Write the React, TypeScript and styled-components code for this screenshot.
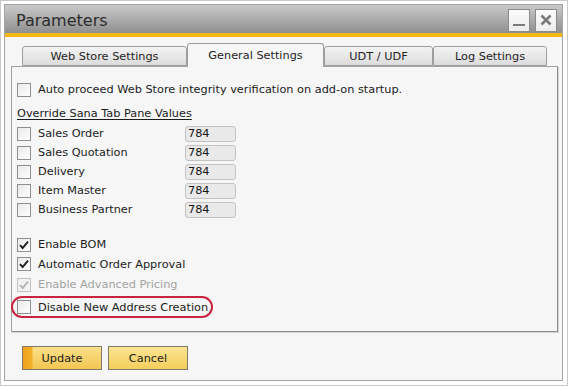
import styled, { createGlobalStyle } from 'styled-components'

const GlobalStyle = createGlobalStyle`
  body {
    margin: 0;
    background: #ffffff;
    font-family: "DejaVu Sans", Verdana, sans-serif;
  }
`

const Frame = styled.div`
  width: 568px;
  height: 386px;
  box-sizing: border-box;
  border: 1px solid #c9c9c9;
  padding: 3px 4px 4px 3px;
  background: #ffffff;
`

const Window = styled.div`
  height: 100%;
  box-sizing: border-box;
  border: 1px solid #a4a4a4;
  background: #f6f6f6;
  display: flex;
  flex-direction: column;
`

const TitleBar = styled.div`
  height: 28px;
  flex: none;
  display: flex;
  align-items: center;
  justify-content: space-between;
  padding: 0 5px 0 11px;
  background: linear-gradient(#cacaca 0%, #a9a9a9 55%, #8f8f8f 100%);
  border-bottom: 4px solid #f5b80e;
`

const Title = styled.div`
  font-size: 16px;
  color: #2c2c2c;
  padding-top: 2px;
`

const WinButtons = styled.div`
  display: flex;
  gap: 5px;
  margin-top: 2px;
`

const WinButton = styled.div`
  width: 22px;
  height: 23px;
  box-sizing: border-box;
  border: 1px solid #8a8a8a;
  background: linear-gradient(#fbfbfb, #ececec);
  display: flex;
  align-items: center;
  justify-content: center;
`

const Body = styled.div`
  flex: 1;
  display: flex;
  flex-direction: column;
  padding: 6px 4px 0 6px;
`

const TabRow = styled.div`
  display: flex;
  align-items: flex-end;
  height: 23px;
  margin-left: 11px;
  position: relative;
  z-index: 1;
`

const Tab = styled.div<{ $active?: boolean; $w: number }>`
  width: ${(p) => p.$w}px;
  height: ${(p) => (p.$active ? 24 : 20)}px;
  margin-bottom: ${(p) => (p.$active ? -1 : 0)}px;
  box-sizing: border-box;
  border: 1px solid #9d9d9d;
  border-bottom: ${(p) => (p.$active ? 'none' : '1px solid #9d9d9d')};
  border-radius: 3px 3px 0 0;
  background: ${(p) =>
    p.$active ? '#f6f6f6' : 'linear-gradient(#f3f3f3, #dcdcdc)'};
  display: flex;
  align-items: center;
  justify-content: center;
  font-size: 11.3px;
  color: #1f1f1f;
  padding-top: 1px;
  padding-bottom: ${(p) => (p.$active ? 2 : 0)}px;
`

const Panel = styled.div`
  height: 266px;
  box-sizing: border-box;
  border: 1px solid #a2a2a2;
  border-right-color: #8c8c8c;
  border-bottom-color: #8c8c8c;
  box-shadow: 1px 1px 0 #d4d4d4;
  padding: 13px 5px 0 5px;
  display: flex;
  flex-direction: column;
`

const Row = styled.div<{ $h?: number; $mt?: number }>`
  display: flex;
  align-items: center;
  height: ${(p) => p.$h ?? 19}px;
  margin-top: ${(p) => p.$mt ?? 0}px;
`

const Box = styled.div<{ $disabled?: boolean }>`
  width: 14px;
  height: 14px;
  flex: none;
  box-sizing: border-box;
  border: 1px solid ${(p) => (p.$disabled ? '#c4c4c4' : '#8e8f8f')};
  background: ${(p) =>
    p.$disabled ? '#f2f2f2' : 'linear-gradient(135deg, #e9e9e9, #ffffff)'};
  display: flex;
  align-items: center;
  justify-content: center;
`

const Label = styled.span<{ $disabled?: boolean; $w?: number }>`
  margin-left: 7px;
  font-size: 11.3px;
  color: ${(p) => (p.$disabled ? '#a3a3a3' : '#1c1c1c')};
  white-space: nowrap;
  ${(p) => (p.$w ? `width: ${p.$w}px; flex: none;` : '')}
`

const SectionTitle = styled.div`
  font-size: 11.3px;
  color: #1c1c1c;
  text-decoration: underline;
  text-underline-offset: 2px;
  height: 19px;
  line-height: 19px;
  margin-top: 5px;
  margin-bottom: 1px;
`

const ValueBox = styled.div`
  width: 51px;
  height: 16px;
  box-sizing: border-box;
  border: 1px solid #c3c3c3;
  border-radius: 3px;
  background: #e9e9e9;
  font-size: 11.3px;
  line-height: 14px;
  padding-left: 2px;
  color: #141414;
`

const Highlight = styled.div`
  width: 202px;
  height: 22px;
  box-sizing: border-box;
  margin: 1px 0 0 -6px;
  padding-left: 4px;
  border: 2px solid #c9243f;
  border-radius: 11px;
  display: flex;
  align-items: center;
`

const Footer = styled.div`
  display: flex;
  gap: 6px;
  padding: 14px 0 0 11px;
`

const Button = styled.div<{ $focused?: boolean }>`
  width: 80px;
  height: 24px;
  box-sizing: border-box;
  border: 1px solid #7f7a6c;
  background: ${(p) =>
    p.$focused
      ? 'linear-gradient(90deg, #f0a11b 0, #f3b02a 9px, transparent 10px), linear-gradient(#fbe08a, #f3c651)'
      : 'linear-gradient(#fbe391, #f4cf5c)'};
  font-size: 11.3px;
  color: #1c1c1c;
  display: flex;
  align-items: center;
  justify-content: center;
`

function Check({ checked, disabled }: { checked?: boolean; disabled?: boolean }) {
  return (
    <Box $disabled={disabled}>
      {checked && (
        <svg width="12" height="12" viewBox="0 0 12 12">
          <path
            d="M2 6.2 L4.6 9 L10 2.6"
            fill="none"
            stroke={disabled ? '#b4b4b4' : '#1e1e1e'}
            strokeWidth="1.9"
          />
        </svg>
      )}
    </Box>
  )
}

const overrides = ['Sales Order', 'Sales Quotation', 'Delivery', 'Item Master', 'Business Partner']

export default function App() {
  return (
    <>
      <GlobalStyle />
      <Frame>
        <Window>
          <TitleBar>
            <Title>Parameters</Title>
            <WinButtons>
              <WinButton>
                <svg width="14" height="14" viewBox="0 0 14 14">
                  <rect x="1" y="11" width="12" height="2" fill="#7a7a7a" />
                </svg>
              </WinButton>
              <WinButton>
                <svg width="14" height="14" viewBox="0 0 14 14">
                  <path d="M2.5 2.5 L11.5 11.5 M11.5 2.5 L2.5 11.5" stroke="#7a7a7a" strokeWidth="2.6" />
                </svg>
              </WinButton>
            </WinButtons>
          </TitleBar>
          <Body>
            <TabRow>
              <Tab $w={165}>Web Store Settings</Tab>
              <Tab $w={137} $active>General Settings</Tab>
              <Tab $w={109}>UDT / UDF</Tab>
              <Tab $w={114}>Log Settings</Tab>
            </TabRow>
            <Panel>
              <Row>
                <Check />
                <Label>Auto proceed Web Store integrity verification on add-on startup.</Label>
              </Row>
              <SectionTitle>Override Sana Tab Pane Values</SectionTitle>
              {overrides.map((name) => (
                <Row key={name}>
                  <Check />
                  <Label $w={147}>{name}</Label>
                  <ValueBox>784</ValueBox>
                </Row>
              ))}
              <Row $mt={16}>
                <Check checked />
                <Label>Enable BOM</Label>
              </Row>
              <Row $h={20}>
                <Check checked />
                <Label>Automatic Order Approval</Label>
              </Row>
              <Row $h={21}>
                <Check checked disabled />
                <Label $disabled>Enable Advanced Pricing</Label>
              </Row>
              <Highlight>
                <Check />
                <Label>Disable New Address Creation</Label>
              </Highlight>
            </Panel>
            <Footer>
              <Button $focused>Update</Button>
              <Button>Cancel</Button>
            </Footer>
          </Body>
        </Window>
      </Frame>
    </>
  )
}
